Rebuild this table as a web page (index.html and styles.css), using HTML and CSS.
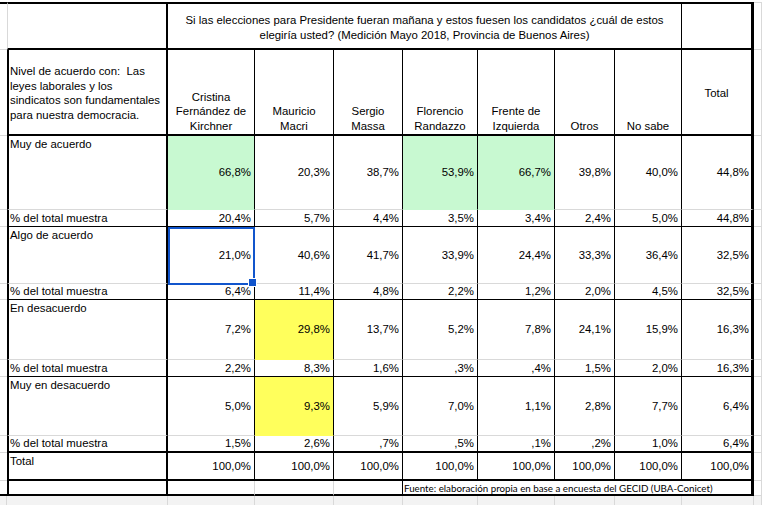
FILE: index.html
```html
<!DOCTYPE html>
<html lang="es">
<head>
<meta charset="utf-8">
<title>Nivel de acuerdo</title>
<link rel="stylesheet" href="styles.css">
</head>
<body>
<div class="sheet">
  <div class="gap"></div>

  <div class="row title">
    <div class="c a"></div>
    <div class="c lbl"></div>
    <div class="c head"><span>Si las elecciones para Presidente fueran mañana y estos fuesen los candidatos ¿cuál de estos<br>elegiría usted? (Medición Mayo 2018, Provincia de Buenos Aires)</span></div>
    <div class="c tot"></div>
    <div class="c k"></div>
  </div>

  <div class="row hdr">
    <div class="c a"></div>
    <div class="c lbl"><span>Nivel de acuerdo con:&nbsp; Las<br>leyes laborales y los<br>sindicatos son fundamentales<br>para nuestra democracia.</span></div>
    <div class="c n"><span>Cristina<br>Fernández de<br>Kirchner</span></div>
    <div class="c n"><span>Mauricio<br>Macri</span></div>
    <div class="c n"><span>Sergio<br>Massa</span></div>
    <div class="c n"><span>Florencio<br>Randazzo</span></div>
    <div class="c n"><span>Frente de<br>Izquierda</span></div>
    <div class="c n"><span>Otros</span></div>
    <div class="c n"><span>No sabe</span></div>
    <div class="c tot"><span>Total</span></div>
    <div class="c k"></div>
  </div>

  <div class="row data">
    <div class="c a"></div>
    <div class="c lbl">Muy de acuerdo</div>
    <div class="c n green">66,8%</div>
    <div class="c n">20,3%</div>
    <div class="c n">38,7%</div>
    <div class="c n green">53,9%</div>
    <div class="c n green">66,7%</div>
    <div class="c n">39,8%</div>
    <div class="c n">40,0%</div>
    <div class="c tot">44,8%</div>
    <div class="c k"></div>
  </div>
  <div class="row pct">
    <div class="c a"></div>
    <div class="c lbl">% del total muestra</div>
    <div class="c n">20,4%</div>
    <div class="c n">5,7%</div>
    <div class="c n">4,4%</div>
    <div class="c n">3,5%</div>
    <div class="c n">3,4%</div>
    <div class="c n">2,4%</div>
    <div class="c n">5,0%</div>
    <div class="c tot">44,8%</div>
    <div class="c k"></div>
  </div>

  <div class="row data">
    <div class="c a"></div>
    <div class="c lbl">Algo de acuerdo</div>
    <div class="c n sel">21,0%</div>
    <div class="c n">40,6%</div>
    <div class="c n">41,7%</div>
    <div class="c n">33,9%</div>
    <div class="c n">24,4%</div>
    <div class="c n">33,3%</div>
    <div class="c n">36,4%</div>
    <div class="c tot">32,5%</div>
    <div class="c k"></div>
  </div>
  <div class="row pct">
    <div class="c a"></div>
    <div class="c lbl">% del total muestra</div>
    <div class="c n">6,4%</div>
    <div class="c n">11,4%</div>
    <div class="c n">4,8%</div>
    <div class="c n">2,2%</div>
    <div class="c n">1,2%</div>
    <div class="c n">2,0%</div>
    <div class="c n">4,5%</div>
    <div class="c tot">32,5%</div>
    <div class="c k"></div>
  </div>

  <div class="row data">
    <div class="c a"></div>
    <div class="c lbl">En desacuerdo</div>
    <div class="c n">7,2%</div>
    <div class="c n yellow">29,8%</div>
    <div class="c n">13,7%</div>
    <div class="c n">5,2%</div>
    <div class="c n">7,8%</div>
    <div class="c n">24,1%</div>
    <div class="c n">15,9%</div>
    <div class="c tot">16,3%</div>
    <div class="c k"></div>
  </div>
  <div class="row pct">
    <div class="c a"></div>
    <div class="c lbl">% del total muestra</div>
    <div class="c n">2,2%</div>
    <div class="c n">8,3%</div>
    <div class="c n">1,6%</div>
    <div class="c n">,3%</div>
    <div class="c n">,4%</div>
    <div class="c n">1,5%</div>
    <div class="c n">2,0%</div>
    <div class="c tot">16,3%</div>
    <div class="c k"></div>
  </div>

  <div class="row data">
    <div class="c a"></div>
    <div class="c lbl">Muy en desacuerdo</div>
    <div class="c n">5,0%</div>
    <div class="c n yellow">9,3%</div>
    <div class="c n">5,9%</div>
    <div class="c n">7,0%</div>
    <div class="c n">1,1%</div>
    <div class="c n">2,8%</div>
    <div class="c n">7,7%</div>
    <div class="c tot">6,4%</div>
    <div class="c k"></div>
  </div>
  <div class="row pct end">
    <div class="c a"></div>
    <div class="c lbl">% del total muestra</div>
    <div class="c n">1,5%</div>
    <div class="c n">2,6%</div>
    <div class="c n">,7%</div>
    <div class="c n">,5%</div>
    <div class="c n">,1%</div>
    <div class="c n">,2%</div>
    <div class="c n">1,0%</div>
    <div class="c tot">6,4%</div>
    <div class="c k"></div>
  </div>

  <div class="row total">
    <div class="c a"></div>
    <div class="c lbl">Total</div>
    <div class="c n">100,0%</div>
    <div class="c n">100,0%</div>
    <div class="c n">100,0%</div>
    <div class="c n">100,0%</div>
    <div class="c n">100,0%</div>
    <div class="c n">100,0%</div>
    <div class="c n">100,0%</div>
    <div class="c tot">100,0%</div>
    <div class="c k"></div>
  </div>

  <div class="row foot">
    <div class="c a"></div>
    <div class="c lbl"></div>
    <div class="c n soft"></div>
    <div class="c n soft"></div>
    <div class="c n"></div>
    <div class="c note">Fuente: elaboración propia en base a encuesta del GECID (UBA-Conicet)</div>
    <div class="c k"></div>
  </div>

  <div class="row rest">
    <div class="c a"></div>
    <div class="c lbl"></div>
    <div class="c n"></div>
    <div class="c n"></div>
    <div class="c n"></div>
    <div class="c n"></div>
    <div class="c n"></div>
    <div class="c n"></div>
    <div class="c n"></div>
    <div class="c tot"></div>
    <div class="c k"></div>
  </div>
</div>
</body>
</html>
```

FILE: styles.css
```css
:root {
  --grid: #d9d9d9;
  --ink: #000;
}

* {
  box-sizing: border-box;
  margin: 0;
  padding: 0;
}

html,
body {
  width: 762px;
  height: 505px;
  overflow: hidden;
  background: #fff;
}

body {
  font-family: "Liberation Sans", Arial, sans-serif;
  font-size: 11.4px;
  color: var(--ink);
}

.sheet {
  display: grid;
  grid-template-columns: 7px 161px 87px 79px 69px 75px 77px 60px 67px 72px 8px;
  grid-template-rows: 2px 48px 86px 74px 17px 57px 16px 60px 17px 59px 17px 28px 15px 9px;
  width: 762px;
  height: 505px;
}

.gap {
  grid-column: 1 / -1;
}

.row {
  display: contents;
}

.c {
  display: flex;
  min-width: 0;
  line-height: 14.5px;
  white-space: nowrap;
  border-bottom: 1px solid var(--grid);
}

.lbl {
  border-left: 2px solid var(--ink);
  border-right: 2px solid var(--ink);
  padding-left: 1px;
}

.n {
  border-right: 1px solid var(--ink);
  justify-content: flex-end;
  align-items: center;
  padding-right: 3px;
}

.tot {
  border-right: 3px solid var(--ink);
  justify-content: flex-end;
  align-items: center;
  padding-right: 2px;
}

.k {
  border-right: 1px solid var(--grid);
}

/* title row */
.title .c {
  border-top: 2px solid var(--ink);
  border-bottom: 2px solid var(--ink);
}

.title .a {
  border-bottom: 1px solid var(--grid);
}

.title .lbl {
  border-left: 1px solid var(--grid);
}

.title .k {
  border-top: 1px solid var(--grid);
  border-bottom: 1px solid var(--grid);
}

.head {
  grid-column: span 7;
  border-right: 1px solid var(--ink);
  justify-content: center;
  align-items: center;
  text-align: center;
  line-height: 15px;
  padding-top: 3px;
}

/* header row */
.hdr .lbl,
.hdr .n,
.hdr .tot {
  border-bottom: 2px solid var(--ink);
}

.hdr .lbl {
  align-items: center;
  padding-top: 2px;
}

.hdr .n {
  justify-content: center;
  align-items: flex-end;
  text-align: center;
  padding: 0 0 1px;
}

.hdr .tot {
  justify-content: center;
  padding: 3px 0 0;
}

/* data rows */
.data .lbl {
  align-items: flex-start;
  padding-top: 1px;
}

.pct .c {
  align-items: center;
}

.pct .lbl,
.pct .n,
.pct .tot {
  border-bottom-color: var(--ink);
}

.pct.end .lbl,
.pct.end .n,
.pct.end .tot {
  border-bottom-width: 2px;
}

.total .lbl,
.total .n,
.total .tot {
  border-bottom: 2px solid var(--ink);
}

.total .lbl {
  align-items: flex-start;
  padding-top: 1px;
}

.total .n,
.total .tot {
  padding-top: 1px;
}

.green {
  background: #c8f9d1;
  border-bottom-color: transparent;
}

.yellow {
  background: #ffff5c;
  border-bottom-color: transparent;
}

/* selected cell */
.sel {
  position: relative;
  z-index: 2;
}

.sel::before {
  content: "";
  position: absolute;
  left: 0;
  top: 0;
  right: -1px;
  bottom: -2px;
  border: 2px solid #1155cc;
}

.sel::after {
  content: "";
  position: absolute;
  right: -3px;
  bottom: -4px;
  width: 7px;
  height: 7px;
  background: #1155cc;
  border: 1px solid #fff;
}

/* footer row */
.foot .a,
.foot .lbl,
.foot .n,
.foot .note {
  border-bottom: 2px solid var(--ink);
}

.foot .soft {
  border-right-color: var(--grid);
}

.note {
  grid-column: span 5;
  border-right: 3px solid var(--ink);
  border-left: 0;
  align-items: center;
  padding-left: 1px;
  font-family: Lato, "Open Sans", sans-serif;
  font-size: 9.75px;
  line-height: 12px;
}

/* empty area below the table */
.rest .c {
  border: 0;
  border-right: 1px solid var(--grid);
  background: #f3f3f3;
}
```
